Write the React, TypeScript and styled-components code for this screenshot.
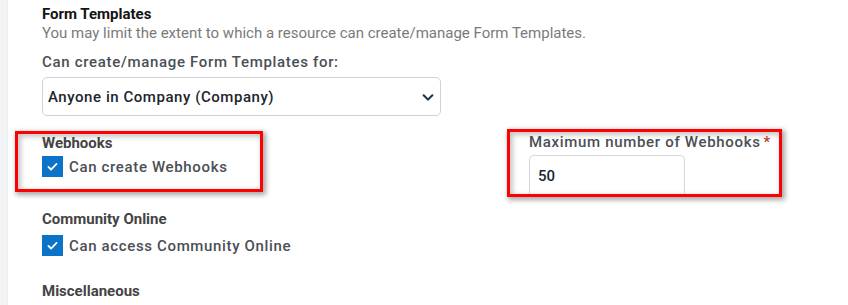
import React from 'react';
import styled, { createGlobalStyle } from 'styled-components';

const GlobalStyle = createGlobalStyle`
  html, body {
    margin: 0;
    padding: 0;
    background: #ffffff;
    font-family: Roboto, "Liberation Sans", Arial, sans-serif;
  }
`;

const Page = styled.div`
  display: flex;
  width: 848px;
  height: 305px;
  overflow: hidden;
`;

const Stripe = styled.div`
  width: 7px;
  flex-shrink: 0;
  background: #f3f4f6;
  border-right: 1px solid #eceef1;
`;

const Content = styled.div`
  flex: 1;
  padding: 6px 0 0 34px;
  display: flex;
  flex-direction: column;
`;

const Heading = styled.div<{ $dark?: boolean }>`
  font-size: 15px;
  line-height: 17px;
  font-weight: 700;
  color: ${p => (p.$dark ? '#141414' : '#444444')};
`;

const Hint = styled.div`
  font-size: 15px;
  line-height: 18px;
  color: #7a7a7a;
  margin-top: 1px;
`;

const FieldLabel = styled.div`
  font-size: 15px;
  line-height: 18px;
  font-weight: 500;
  color: #4b4f55;
  letter-spacing: 0.68px;
  display: flex;
  align-items: flex-start;
`;

const Required = styled.span`
  color: #c0392b;
  margin-left: 3px;
`;

const SelectBox = styled.div`
  margin-top: 6px;
  width: 399px;
  height: 39px;
  box-sizing: border-box;
  border: 1px solid #cfd3d8;
  border-radius: 5px;
  display: flex;
  align-items: center;
  justify-content: space-between;
  padding: 0 5px 0 5px;
  font-size: 15px;
  font-weight: 500;
  color: #1c2530;
  letter-spacing: 0.55px;
`;

const Chevron = styled.svg`
  width: 14px;
  height: 14px;
  color: #1e3446;
`;

const HighlightRow = styled.div`
  display: flex;
  align-items: flex-start;
  margin-top: 13px;
  gap: 244px;
  margin-left: -27px;
`;

const Highlight = styled.div<{ $width: number; $offset: number; $padLeft: number }>`
  width: ${p => p.$width}px;
  margin-top: ${p => p.$offset}px;
  box-sizing: border-box;
  border: 3px solid #ff0000;
  box-shadow: 2px 2px 5px 1px rgba(0, 0, 0, 0.35), inset 2px 2px 5px 1px rgba(0, 0, 0, 0.22);
  padding: 1px 0 0 ${p => p.$padLeft}px;
  display: flex;
  flex-direction: column;
`;

const CheckRow = styled.label<{ $top: number; $bottom?: number }>`
  display: flex;
  align-items: center;
  gap: 6px;
  margin-top: ${p => p.$top}px;
  margin-bottom: ${p => p.$bottom ?? 0}px;
  font-size: 15px;
  font-weight: 500;
  color: #4b4f55;
  letter-spacing: 0.65px;
`;

const CheckBox = styled.span`
  width: 21px;
  height: 21px;
  background: #0b74c8;
  display: flex;
  align-items: center;
  justify-content: center;
  flex-shrink: 0;
`;

const NumberInput = styled.div`
  margin-top: 4px;
  width: 156px;
  height: 39px;
  box-sizing: border-box;
  border: 1px solid #d3d6da;
  border-bottom: none;
  border-radius: 5px 5px 0 0;
  display: flex;
  align-items: center;
  padding: 2px 0 0 8px;
  font-size: 15px;
  font-weight: 500;
  color: #1c2530;
`;

const Section = styled.div<{ $top: number }>`
  margin-top: ${p => p.$top}px;
  display: flex;
  flex-direction: column;
`;

const Check = () => (
  <svg width="13" height="13" viewBox="0 0 16 16">
    <path d="M3 8.5l3.2 3.2L13 4.8" fill="none" stroke="#ffffff" strokeWidth="2.2" strokeLinecap="round" strokeLinejoin="round" />
  </svg>
);

const App: React.FC = () => {
  return (
    <>
      <GlobalStyle />
      <Page>
        <Stripe />
        <Content>
          <Heading $dark>Form Templates</Heading>
          <Hint>You may limit the extent to which a resource can create/manage Form Templates.</Hint>
          <Section $top={11}>
            <FieldLabel>Can create/manage Form Templates for:</FieldLabel>
            <SelectBox>
              <span>Anyone in Company (Company)</span>
              <Chevron viewBox="0 0 16 16">
                <path d="M3 6l5 5 5-5" fill="none" stroke="currentColor" strokeWidth="2.4" strokeLinecap="round" strokeLinejoin="round" />
              </Chevron>
            </SelectBox>
          </Section>

          <HighlightRow>
            <Highlight $width={248} $offset={2} $padLeft={24}>
              <Heading>Webhooks</Heading>
              <CheckRow $top={4} $bottom={12}>
                <CheckBox><Check /></CheckBox>
                Can create Webhooks
              </CheckRow>
            </Highlight>
            <Highlight $width={275} $offset={0} $padLeft={19}>
              <FieldLabel>
                Maximum number of Webhooks<Required>*</Required>
              </FieldLabel>
              <NumberInput>50</NumberInput>
            </Highlight>
          </HighlightRow>

          <Section $top={14}>
            <Heading>Community Online</Heading>
            <CheckRow $top={7}>
              <CheckBox><Check /></CheckBox>
              Can access Community Online
            </CheckRow>
          </Section>

          <Section $top={27}>
            <Heading>Miscellaneous</Heading>
          </Section>
        </Content>
      </Page>
    </>
  );
};

export default App;
